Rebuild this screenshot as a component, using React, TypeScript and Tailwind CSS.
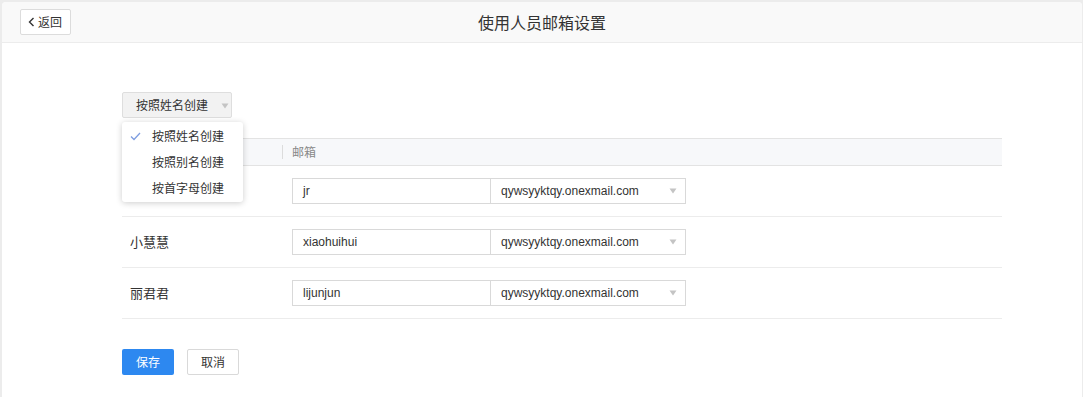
import React from "react";

const cn = '"Noto Sans CJK SC", "Liberation Sans", sans-serif';
const lat = '"Liberation Sans", "Noto Sans CJK SC", sans-serif';

function Tri() {
  return (
    <svg width="8" height="6" viewBox="0 0 8 6">
      <path d="M0.5 0.5 L7.5 0.5 L4 5.5 Z" fill="#c4c4c4" />
    </svg>
  );
}

const rows = [
  { name: "", user: "jr" },
  { name: "小慧慧", user: "xiaohuihui" },
  { name: "丽君君", user: "lijunjun" },
];

export default function App() {
  return (
    <div className="w-[1083px] h-[397px] bg-[#ececec] pt-[2px] pl-[2px] pr-[1px] overflow-hidden" style={{ fontFamily: cn }}>
      <div className="h-[395px] bg-white rounded-t-[4px] flex flex-col">
        <div className="h-[41px] bg-[#f9f9f9] border-b border-[#ececec] rounded-t-[4px] relative flex items-center justify-center shrink-0">
          <button className="absolute left-[18px] top-[7px] h-[26px] w-[51px] border border-[#dcdcdc] bg-white rounded-[2px] flex items-center pl-[7px] text-[12px] text-[#333]">
            <svg width="7" height="10" viewBox="0 0 7 10" className="mr-[3px]">
              <path d="M5.5 1 L1.5 5 L5.5 9" fill="none" stroke="#333" strokeWidth="1.4" />
            </svg>
            返回
          </button>
          <div className="text-[16px] text-[#333] leading-none">使用人员邮箱设置</div>
        </div>
        <div className="pl-[120px] pt-[49px] relative">
          <div className="h-[26px] w-[110px] bg-[#f2f2f2] border border-[#dedede] rounded-[2px] flex items-center pl-[13px] text-[12px] text-[#333]">
            <span>按照姓名创建</span>
            <span className="ml-[13px] mt-[1px]"><Tri /></span>
          </div>
          <div className="w-[880px] mt-[20px]">
            <div className="h-[28px] bg-[#f7f8fa] border-t border-b border-[#e3e3e3] flex items-center text-[12px] text-[#888]">
              <div className="w-[160px] pl-[8px]">姓名</div>
              <div className="border-l border-[#dcdcdc] h-[14px] pl-[9px] flex items-center">邮箱</div>
            </div>
            {rows.map((r, i) => (
              <div key={i} className="h-[51px] border-b border-[#ececec] flex items-center">
                <div className="w-[170px] pl-[8px] text-[13px] text-[#333]">{r.name}</div>
                <div className="flex h-[26px] border border-[#d9d9d9]" style={{ fontFamily: lat }}>
                  <div className="w-[198px] border-r border-[#d9d9d9] pl-[10px] flex items-center text-[12px] text-[#333]">{r.user}</div>
                  <div className="w-[194px] pl-[10px] pr-[8px] flex items-center justify-between text-[12px] text-[#333]">
                    <span>qywsyyktqy.onexmail.com</span>
                    <Tri />
                  </div>
                </div>
              </div>
            ))}
          </div>
          <div className="flex gap-[13px] mt-[30px]">
            <button className="h-[26px] w-[52px] bg-[#2d88f0] rounded-[2px] text-white text-[12px]">保存</button>
            <button className="h-[26px] w-[52px] bg-white border border-[#d9d9d9] rounded-[2px] text-[#333] text-[12px]">取消</button>
          </div>
          <div className="absolute left-[120px] top-[79px] w-[121px] bg-white rounded-[3px] shadow-[0_1px_6px_rgba(0,0,0,0.2)] py-[1px] text-[12px] text-[#333]">
            {["按照姓名创建", "按照别名创建", "按首字母创建"].map((t, i) => (
              <div key={t} className="h-[26px] flex items-center pl-[8px]">
                <span className="w-[22px] flex items-center">
                  {i === 0 && (
                    <svg width="11" height="9" viewBox="0 0 11 9">
                      <path d="M1 4.5 L4 7.5 L10 1" fill="none" stroke="#7f9ee0" strokeWidth="1.3" />
                    </svg>
                  )}
                </span>
                {t}
              </div>
            ))}
          </div>
        </div>
      </div>
    </div>
  );
}
